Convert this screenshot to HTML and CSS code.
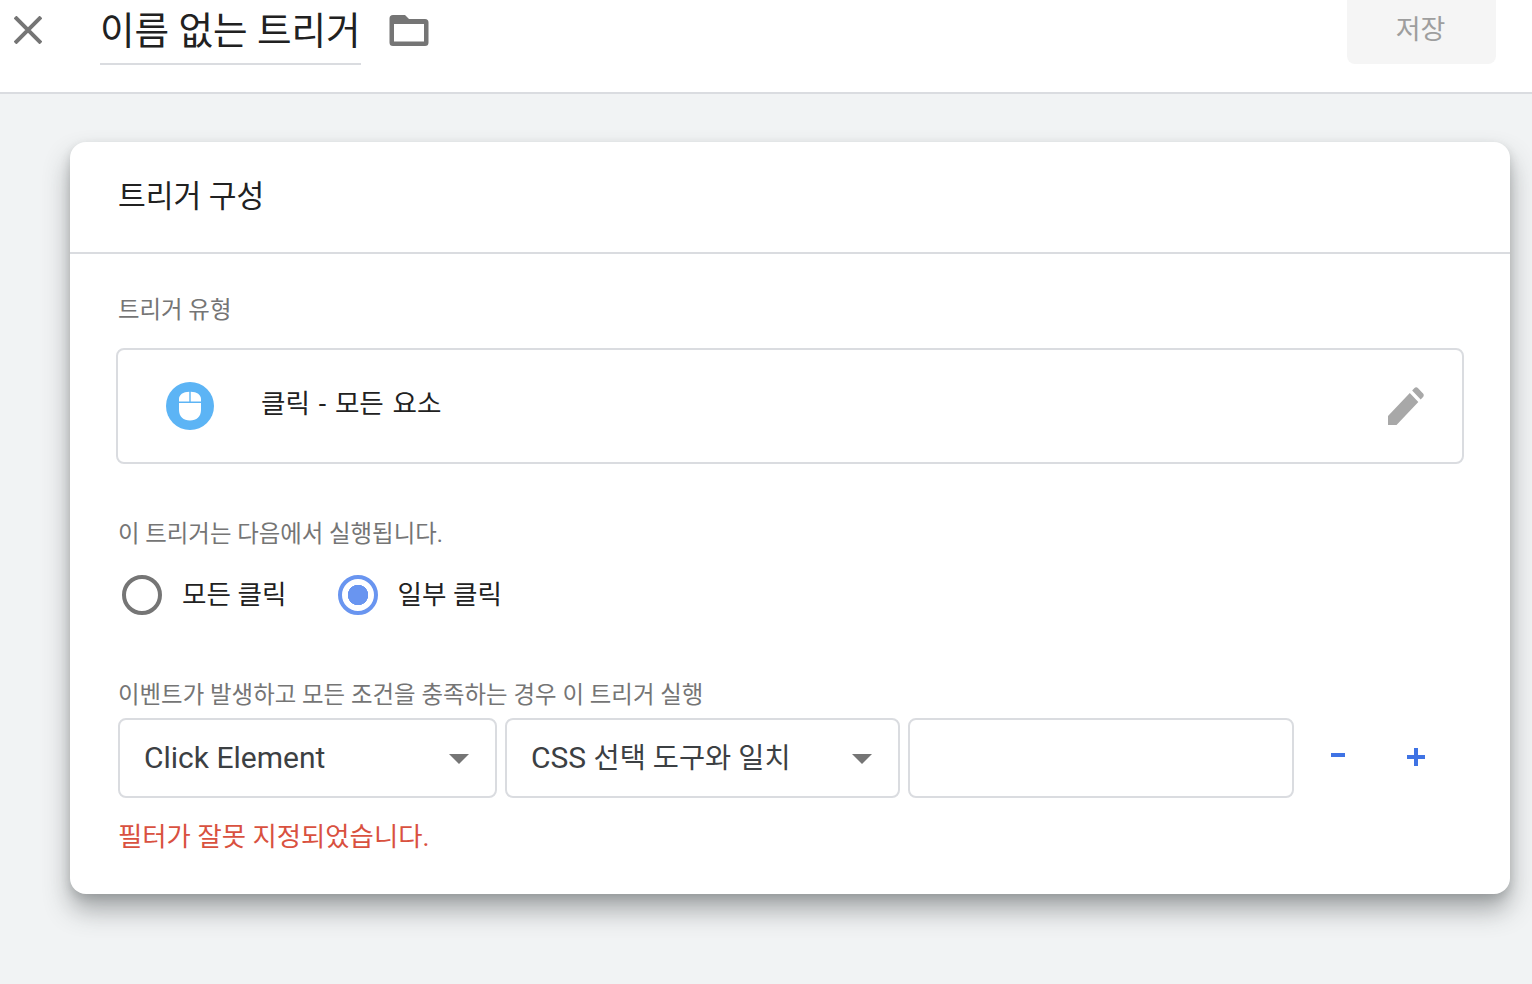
FILE: index.html
```html
<!DOCTYPE html>
<html lang="ko">
<head>
<meta charset="utf-8">
<title>이름 없는 트리거</title>
<link rel="stylesheet" href="styles.css">
</head>
<body>
<header class="topbar">
  <svg class="close-icon" viewBox="0 0 28 28" width="28" height="28"><path d="M1 1 L27 27 M27 1 L1 27" fill="none" stroke="#757575" stroke-width="4"/></svg>
  <div class="title">이름 없는 트리거</div>
  <svg class="folder-icon" viewBox="0 0 40 32" width="40" height="32"><path d="M4 0h12l4 4h16a3.500 3.500 0 0 1 3.500 3.500v20a3.500 3.500 0 0 1-3.500 3.500h-32a3.500 3.500 0 0 1-3.500-3.500v-24a3.500 3.500 0 0 1 3.500-3.500z M5 9v17.500h30v-17.500z" fill="#757575" fill-rule="evenodd"/></svg>
  <button class="save">저장</button>
</header>
<main class="content">
  <section class="card">
    <h2 class="card-title">트리거 구성</h2>
    <div class="card-body">
      <div class="label label-type">트리거 유형</div>
      <div class="type-box">
        <svg class="mouse-icon" viewBox="0 0 48 48" width="48" height="48">
          <circle cx="24" cy="24" r="24" fill="#5cb4f5"/>
          <path d="M23.300 9.800v9.800h-10.300v-2.600c0-4 4-7.200 10.300-7.200z M24.700 9.800c6.300 0 10.300 3.200 10.300 7.200v2.600h-10.300z M13 21h22v7c0 6.500-4.500 10.500-11 10.500s-11-4-11-10.500z" fill="#fff"/>
        </svg>
        <span class="type-name">클릭 - 모든 요소</span>
        <svg class="edit-icon" viewBox="0 0 38 38" width="36" height="38" preserveAspectRatio="none"><path d="M0 29 L23 6 L32 15 L9 38 H0 Z M25.500 3.500 L28 1 C29 0 30.500 0 31.500 1 L37 6.500 C38 7.500 38 9 37 10 L34.500 12.500 Z" fill="#a8a8a8"/></svg>
      </div>
      <div class="label label-runs">이 트리거는 다음에서 실행됩니다.</div>
      <div class="radios">
        <label class="radio"><span class="radio-mark"></span><span class="radio-text">모든 클릭</span></label>
        <label class="radio radio-on"><span class="radio-mark"></span><span class="radio-text">일부 클릭</span></label>
      </div>
      <div class="label label-cond">이벤트가 발생하고 모든 조건을 충족하는 경우 이 트리거 실행</div>
      <div class="filter-row">
        <div class="field field-a">Click Element<span class="caret"></span></div>
        <div class="field field-b">CSS <span class="field-ko">선택 도구와 일치</span><span class="caret"></span></div>
        <div class="field field-c"></div>
        <svg class="minus" viewBox="0 0 14 4" width="14" height="4"><rect width="14" height="4" fill="#3f73e4"/></svg>
        <svg class="plus" viewBox="0 0 18 18" width="18" height="18"><path d="M7 0h4v7h7v4h-7v7h-4v-7h-7v-4h7z" fill="#3f73e4"/></svg>
      </div>
      <div class="error">필터가 잘못 지정되었습니다.</div>
    </div>
  </section>
</main>
</body>
</html>
```

FILE: styles.css
```css
* { box-sizing: border-box; }
html, body { margin: 0; height: 100%; }
body {
  width: 1532px;
  height: 984px;
  overflow: hidden;
  background: #f1f3f4;
  font-family: Roboto, "Noto Sans CJK KR", sans-serif;
  color: #333;
}
.topbar {
  height: 94px;
  background: #fff;
  border-bottom: 2px solid #dadce0;
  display: flex;
  align-items: flex-start;
  padding: 0 36px 0 14px;
}
.close-icon { margin-top: 16px; flex: none; }
.title {
  margin-left: 58px;
  width: 261px;
  height: 65px;
  border-bottom: 2px solid #dadce0;
  font-size: 37.6px;
  line-height: 62px;
  color: #212121;
  white-space: nowrap;
}
.folder-icon { margin: 15px 0 0 28px; flex: none; }
.save {
  margin-left: auto;
  width: 149px;
  height: 64px;
  border: 0;
  border-radius: 0 0 8px 8px;
  background: #f5f5f5;
  color: #9e9e9e;
  font: 27px/50px Roboto, "Noto Sans CJK KR", sans-serif;
  padding: 0 2px 4px 0;
}
.content { padding: 48px 22px 0 70px; }
.card {
  height: 752px;
  background: #fff;
  border-radius: 16px;
  box-shadow: 0 16px 26px rgba(60, 64, 67, .42), 0 4px 10px rgba(60, 64, 67, .18);
}
.card-title {
  margin: 0;
  height: 112px;
  padding: 33px 48px 0;
  border-bottom: 2px solid #dadce0;
  font-size: 30.2px;
  line-height: 44px;
  font-weight: 400;
  color: #212121;
}
.card-body { padding: 0 46px 0 46px; }
.label {
  margin-left: 2px;
  font-size: 23.4px;
  line-height: 32px;
  color: #757575;
  white-space: nowrap;
}
.label-type { padding-top: 40px; height: 94px; }
.type-box {
  height: 116px;
  border: 2px solid #dadce0;
  border-radius: 8px;
  display: flex;
  align-items: center;
  padding: 0 38px 0 48px;
}
.mouse-icon { flex: none; }
.type-name {
  margin-left: 47px;
  margin-top: -10px;
  font-size: 26.6px;
  word-spacing: 2.2px;
  color: #212121;
}
.edit-icon { margin-left: auto; margin-top: -1px; flex: none; }
.label-runs { margin-top: 54px; }
.radios { display: flex; margin-top: 25px; margin-left: 6px; }
.radio {
  display: flex;
  align-items: center;
  height: 40px;
  font-size: 26.6px;
  color: #212121;
  margin-right: 52px;
}
.radio-text { margin-top: -6px; }
.radio-mark {
  width: 40px;
  height: 40px;
  border: 4px solid #757575;
  border-radius: 50%;
  margin-right: 20px;
  background: #fff;
}
.radio-on .radio-mark {
  border-color: #6995f0;
  margin-right: 19px;
  background: radial-gradient(circle, #6995f0 10px, #fff 10.500px);
}
.label-cond { margin-top: 64px; letter-spacing: .03px; }
.filter-row { display: flex; align-items: center; margin: 7px 0 0 2px; }
.field {
  position: relative;
  height: 80px;
  border: 2px solid #dadce0;
  border-radius: 8px;
  font-size: 30px;
  line-height: 76px;
  padding-left: 24px;
  color: #3c4043;
  white-space: nowrap;
}
.field-ko { font-size: 28.4px; }
.field-a { width: 379px; }
.field-b { width: 395px; margin-left: 8px; }
.field-c { width: 386px; margin-left: 8px; }
.caret {
  position: absolute;
  right: 26px;
  top: 34px;
  border-left: 10px solid transparent;
  border-right: 10px solid transparent;
  border-top: 10px solid #757575;
}
.minus { margin-left: 37px; margin-top: -6px; flex: none; }
.plus { margin-left: 62px; margin-top: -2px; flex: none; }
.error {
  margin: 19px 0 0 2px;
  font-size: 26.4px;
  line-height: 40px;
  color: #d9513f;
  white-space: nowrap;
}
```
